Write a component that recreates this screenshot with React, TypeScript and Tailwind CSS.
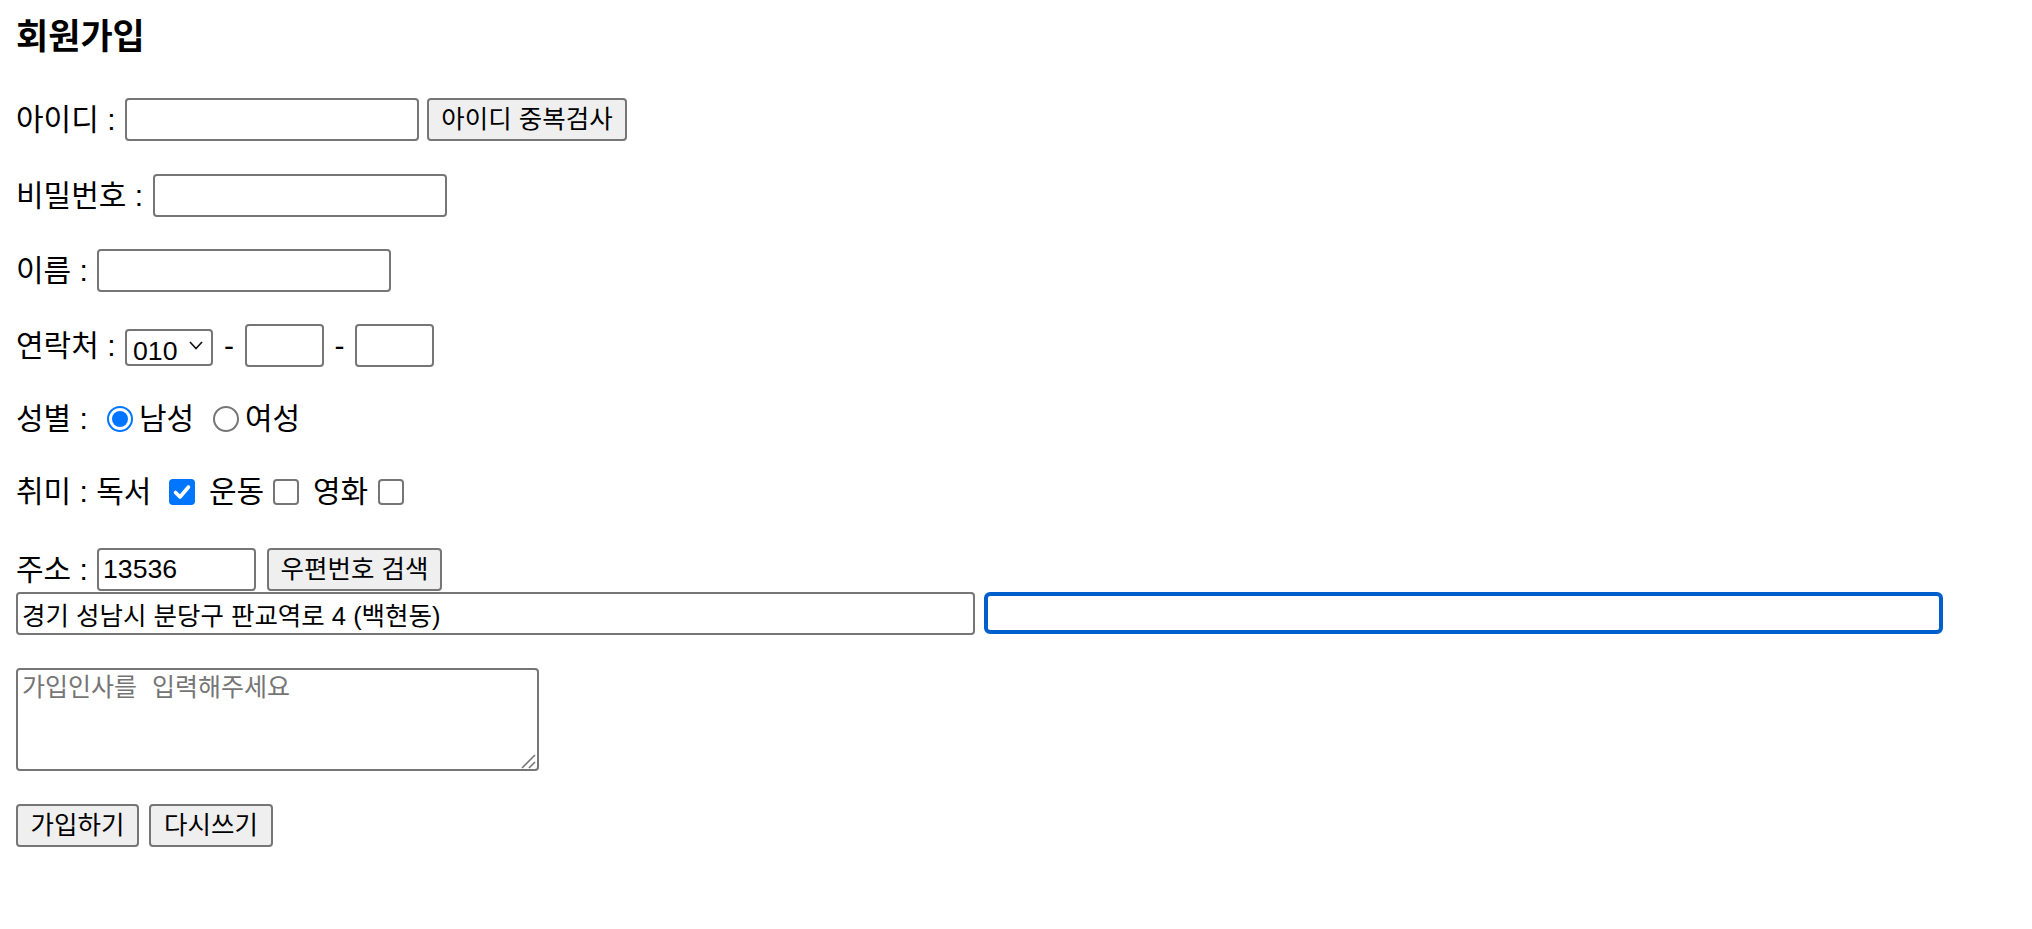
import React from 'react';

const inputCls =
  'h-[43px] border-2 border-[#767676] rounded-[4px] bg-white px-[4px] text-[25.5px] text-black outline-none';
const btnCls =
  'h-[43px] border-2 border-[#767676] rounded-[4px] bg-[#efefef] text-[25.5px] text-black flex items-center justify-center';

const Radio = ({ checked }: { checked?: boolean }) =>
  checked ? (
    <span className="w-[26px] h-[26px] rounded-full border-2 border-[#0075ff] bg-white flex items-center justify-center shrink-0">
      <span className="w-[16px] h-[16px] rounded-full bg-[#0075ff]" />
    </span>
  ) : (
    <span className="w-[26px] h-[26px] rounded-full border-2 border-[#767676] bg-white shrink-0" />
  );

const Check = ({ checked }: { checked?: boolean }) =>
  checked ? (
    <span className="w-[26px] h-[26px] rounded-[4px] bg-[#0075ff] flex items-center justify-center shrink-0">
      <svg width="26" height="26" viewBox="0 0 26 26">
        <path d="M6.5 13.5 L11 18 L19.5 8" fill="none" stroke="#fff" strokeWidth="3.6" strokeLinecap="round" strokeLinejoin="round" />
      </svg>
    </span>
  ) : (
    <span className="w-[26px] h-[26px] rounded-[4px] border-2 border-[#767676] bg-white shrink-0" />
  );

export default function App() {
  return (
    <div className="min-h-[929px] bg-white text-black pl-[16px] font-['Liberation_Sans','Noto_Sans_CJK_KR',sans-serif] text-[30px]">
      {/* title */}
      <div className="mt-[17px] h-[40px] leading-[40px] text-[35px] font-bold">회원가입</div>

      {/* 아이디 */}
      <div className="mt-[41px] h-[43px] flex items-center">
        <span className="w-[109px] shrink-0">아이디 :</span>
        <input className={`${inputCls} w-[294px]`} />
        <button className={`${btnCls} w-[200px] ml-[8px]`}>아이디 중복검사</button>
      </div>

      {/* 비밀번호 */}
      <div className="mt-[33px] h-[43px] flex items-center">
        <span className="w-[137px] shrink-0">비밀번호 :</span>
        <input type="password" className={`${inputCls} w-[294px]`} />
      </div>

      {/* 이름 */}
      <div className="mt-[32px] h-[43px] flex items-center">
        <span className="w-[81px] shrink-0">이름 :</span>
        <input className={`${inputCls} w-[294px]`} />
      </div>

      {/* 연락처 */}
      <div className="mt-[32px] h-[43px] flex items-center">
        <span className="w-[109px] shrink-0">연락처 :</span>
        <div className="relative w-[88px] h-[37px] shrink-0">
          <select
            defaultValue="010"
            className="w-full h-full appearance-none border-2 border-[#767676] rounded-[4px] bg-white pl-[6px] pb-[2px] text-[26.67px] text-black outline-none"
          >
            <option>010</option>
            <option>011</option>
            <option>016</option>
          </select>
          <svg className="absolute right-[10px] top-[14px] pointer-events-none" width="14" height="9" viewBox="0 0 14 9">
            <path d="M1 1 L7 7.5 L13 1" fill="none" stroke="#111" strokeWidth="1.6" />
          </svg>
        </div>
        <span className="w-[32px] text-center shrink-0">-</span>
        <input className={`${inputCls} w-[79px]`} />
        <span className="w-[31px] text-center shrink-0">-</span>
        <input className={`${inputCls} w-[79px]`} />
      </div>

      {/* 성별 */}
      <div className="mt-[30px] h-[43px] flex items-center">
        <span className="w-[91px] shrink-0">성별 :</span>
        <Radio checked />
        <span className="w-[80px] pl-[6px] shrink-0">남성</span>
        <Radio />
        <span className="pl-[6px]">여성</span>
      </div>

      {/* 취미 */}
      <div className="mt-[30px] h-[43px] flex items-center">
        <span className="w-[153px] shrink-0">취미 : 독서</span>
        <Check checked />
        <span className="w-[78px] pl-[14px] shrink-0">운동</span>
        <Check />
        <span className="w-[79px] pl-[14px] shrink-0">영화</span>
        <Check />
      </div>

      {/* 주소 */}
      <div className="mt-[35px] h-[42px] flex items-center">
        <span className="w-[81px] shrink-0">주소 :</span>
        <input defaultValue="13536" className={`${inputCls} h-[42px] w-[159px] text-[26.67px]`} />
        <button className={`${btnCls} h-[42px] w-[175px] ml-[11px]`}>우편번호 검색</button>
      </div>
      <div className="mt-[2px] h-[42px] flex items-center">
        <input
          defaultValue="경기 성남시 분당구 판교역로 4 (백현동)"
          className={`${inputCls} h-[42px] w-[959px]`}
        />
        <input className="ml-[9px] h-[42px] w-[959px] border-[4px] border-[#005fcc] rounded-[6px] bg-white px-[4px] text-[25.5px] outline-none" />
      </div>

      {/* 가입인사 */}
      <div className="mt-[34px] relative w-[523px] h-[103px]">
        <textarea
          placeholder="가입인사를 입력해주세요"
          className="w-full h-full resize-none border-2 border-[#767676] rounded-[4px] bg-white px-[4px] py-[4px] text-[25px] leading-[32px] font-['Liberation_Mono','Noto_Sans_CJK_KR',monospace] placeholder:text-[#757575] outline-none"
        />
        <svg className="absolute right-[3px] bottom-[2px] pointer-events-none" width="16" height="16" viewBox="0 0 16 16">
          <path d="M2 15 L15 2 M9 15 L15 9" stroke="#777" strokeWidth="1.6" />
        </svg>
      </div>

      {/* 버튼 */}
      <div className="mt-[33px] flex items-center">
        <button className={`${btnCls} w-[123px]`}>가입하기</button>
        <button className={`${btnCls} w-[124px] ml-[10px]`}>다시쓰기</button>
      </div>
    </div>
  );
}
